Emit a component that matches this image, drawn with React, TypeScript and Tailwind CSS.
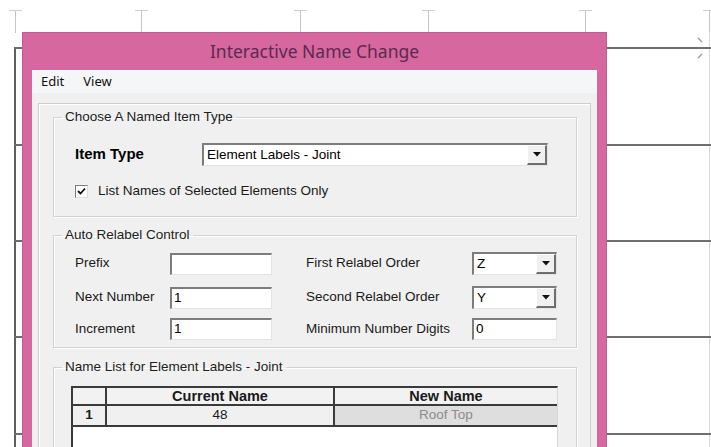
import React from 'react'

// ─── Background canvas: ruler ticks and grid lines behind the dialog ─────────

const TOP_TICKS = [15, 141, 300, 428, 585, 709]
const GRID_ROWS = [47, 144, 240, 336, 433]

function Canvas() {
  return (
    <>
      {TOP_TICKS.map((x) => (
        <div key={x} className="absolute top-[10px]" style={{ left: x - 6 }}>
          <div className="w-[13px] h-px bg-[#cfcfcf]" />
          <div className="ml-[6px] w-px h-[22px] bg-[#c4c4c4]" />
        </div>
      ))}
      <div className="absolute left-[14px] top-[47px] w-[2px] h-[400px] bg-[#5f5f5f]" />
      <div className="absolute left-[709px] top-[32px] w-px h-[415px] bg-[#d8d8d8]" />
      {GRID_ROWS.map((y) => (
        <div key={y} className="absolute left-[14px] w-[697px] h-[2px] bg-[#6e6e6e]" style={{ top: y }} />
      ))}
      <svg className="absolute left-[694px] top-[34px]" width="14" height="28" viewBox="0 0 14 28">
        <path d="M4 4 L8 8" stroke="#9a9a9a" strokeWidth="1.2" />
        <path d="M4 24 L8 20" stroke="#9a9a9a" strokeWidth="1.2" />
      </svg>
    </>
  )
}

// ─── Classic Win32 controls ──────────────────────────────────────────────────

function TextBox({ value = '', width }: { value?: string; width: string }) {
  return (
    <div
      className={`${width} h-[22px] bg-white border-t-2 border-l-2 border-b border-r border-t-[#7d7d7d] border-l-[#7d7d7d] border-b-[#e4e4e4] border-r-[#e4e4e4] pl-[2px] flex items-center text-[13.5px] text-black`}
    >
      {value}
    </div>
  )
}

function DropArrow() {
  return (
    <div className="w-[20px] h-full bg-[#f0f0f0] border-t border-l border-t-white border-l-white border-b-2 border-r-2 border-b-[#6f6f6f] border-r-[#6f6f6f] flex items-center justify-center">
      <svg width="8" height="5" viewBox="0 0 8 5">
        <path d="M0 0 H8 L4 4.5 Z" fill="#111" />
      </svg>
    </div>
  )
}

function ComboBox({ value, width }: { value: string; width: string }) {
  return (
    <div
      className={`${width} h-[23px] bg-white border-t-2 border-l-2 border-b border-r border-t-[#7d7d7d] border-l-[#7d7d7d] border-b-[#e4e4e4] border-r-[#e4e4e4] flex items-stretch`}
    >
      <div className="flex-1 pl-[3px] flex items-center text-[13.5px] text-black">{value}</div>
      <DropArrow />
    </div>
  )
}

function GroupBox({
  title,
  className,
  children,
}: {
  title: string
  className: string
  children: React.ReactNode
}) {
  return (
    <fieldset
      className={`${className} border border-[#d2d2d2] shadow-[1px_1px_0_#fff,inset_1px_1px_0_#fff]`}
    >
      <legend className="ml-[8px] px-[3px] text-[13.5px] leading-[16px] text-[#222]">{title}</legend>
      {children}
    </fieldset>
  )
}

function RelabelRow({
  label,
  value,
  rightLabel,
  right,
  className,
}: {
  label: string
  value?: string
  rightLabel: string
  right: React.ReactNode
  className: string
}) {
  return (
    <div className={`flex items-center pl-[21px] ${className}`}>
      <span className="w-[95px]">{label}</span>
      <TextBox value={value} width="w-[102px]" />
      <span className="ml-[34px] w-[166px]">{rightLabel}</span>
      {right}
    </div>
  )
}

// ─── Name list grid ──────────────────────────────────────────────────────────

function NameGrid() {
  return (
    <div className="ml-[17px] mt-[11px] w-[487px] h-[70px] flex flex-col border-l-2 border-t-2 border-[#3a3a3a] border-r border-r-[#d8d8d8] bg-white">
      <div className="flex h-[18px] bg-[#f2f2f2] border-b-2 border-[#3a3a3a] text-[14.5px] font-bold leading-[17px]">
        <div className="w-[34px] border-r-2 border-[#3a3a3a]" />
        <div className="w-[228px] border-r-2 border-[#3a3a3a] text-center">Current Name</div>
        <div className="flex-1 text-center">New Name</div>
      </div>
      <div className="flex h-[21px] border-b-2 border-[#3a3a3a] text-[13.5px] leading-[18px]">
        <div className="w-[34px] bg-[#f0f0f0] border-r-2 border-[#3a3a3a] text-center font-bold">1</div>
        <div className="w-[228px] bg-[#f0f0f0] border-r-2 border-[#3a3a3a] text-center">48</div>
        <div className="flex-1 bg-[#dedede] text-center text-[#8c8c8c]">Roof Top</div>
      </div>
    </div>
  )
}

// ─── Interactive Name Change dialog ──────────────────────────────────────────

function NameChangeDialog() {
  return (
    <div className="absolute left-[22px] top-[32px] w-[585px] h-[430px] bg-[#d6679f] border border-[#c45b8f] flex flex-col">
      <div className="h-[37px] pb-[1px] flex items-center justify-center font-['Noto_Sans',sans-serif] text-[17.5px] text-[#5c2a50]">
        Interactive Name Change
      </div>

      <div className="mx-[9px] flex-1 bg-[#f0f0f0] flex flex-col font-['Liberation_Sans',Arial,sans-serif] text-[13.5px] text-[#1a1a1a]">
        {/* menu bar */}
        <div className="h-[23px] bg-[#f5f6f7] flex items-center pl-[9px] gap-[19px] font-['Noto_Sans',sans-serif] text-[13px] text-[#111]">
          <span>Edit</span>
          <span>View</span>
        </div>

        <div className="px-[6px] pt-[10px] flex-1 flex flex-col">
          <div className="flex-1 border border-[#cdcdcd] shadow-[inset_1px_1px_0_#fff] pl-[14px] pr-[13px] pt-[5px] flex flex-col">
            <GroupBox title="Choose A Named Item Type" className="h-[108px]">
              <div className="flex items-center pl-[21px] mt-[18px]">
                <span className="w-[127px] text-[15px] font-bold text-black">Item Type</span>
                <ComboBox value="Element Labels - Joint" width="w-[346px]" />
              </div>
              <div className="flex items-center pl-[21px] mt-[15px]">
                <div className="w-[13px] h-[13px] bg-white border-t border-l border-[#7a7a7a] border-b border-r border-b-[#e0e0e0] border-r-[#e0e0e0] flex items-center justify-center">
                  <svg width="9" height="9" viewBox="0 0 9 9">
                    <path d="M1 4 L3.5 6.5 L8 1.5" stroke="#111" strokeWidth="1.8" fill="none" />
                  </svg>
                </div>
                <span className="ml-[10px]">List Names of Selected Elements Only</span>
              </div>
            </GroupBox>

            <GroupBox title="Auto Relabel Control" className="mt-[10px] h-[121px]">
              <RelabelRow
                className="mt-[9px]"
                label="Prefix"
                rightLabel="First Relabel Order"
                right={<ComboBox value="Z" width="w-[85px]" />}
              />
              <RelabelRow
                className="mt-[11px]"
                label="Next Number"
                value="1"
                rightLabel="Second Relabel Order"
                right={<ComboBox value="Y" width="w-[85px]" />}
              />
              <RelabelRow
                className="mt-[9px]"
                label="Increment"
                value="1"
                rightLabel="Minimum Number Digits"
                right={<TextBox value="0" width="w-[85px]" />}
              />
            </GroupBox>

            <GroupBox title="Name List for Element Labels - Joint" className="mt-[11px] flex-1">
              <NameGrid />
            </GroupBox>
          </div>
        </div>
      </div>
    </div>
  )
}

export default function App() {
  return (
    <div className="relative w-[711px] h-[447px] overflow-hidden bg-white">
      <Canvas />
      <NameChangeDialog />
    </div>
  )
}
